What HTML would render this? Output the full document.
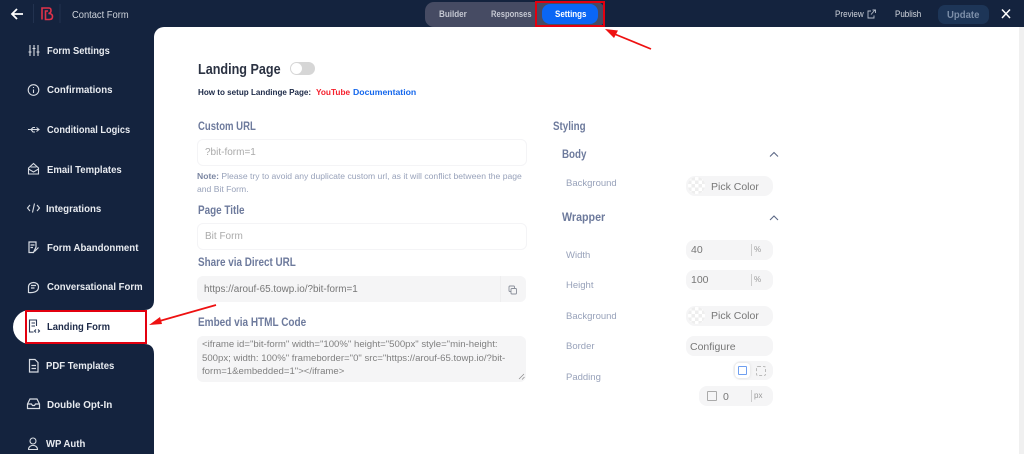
<!DOCTYPE html>
<html><head><meta charset="utf-8"><style>
html,body{margin:0;padding:0}
body{width:1024px;height:454px;overflow:hidden;position:relative;background:#14233e;font-family:"Liberation Sans",sans-serif}
.t{position:absolute;white-space:nowrap;line-height:1;transform-origin:0 0}
.side{color:#e8ebf0;font-size:10.5px;font-weight:bold}
.lab{color:#6d7a9c;font-size:11.5px;font-weight:bold}
.sub{color:#98a2ba;font-size:9.5px}
.box{position:absolute;box-sizing:border-box;border-radius:6px}
.in{border:1px solid #f4f4f6;background:#fff}
.gr{background:#f5f5f6}
.v{color:#777;font-size:10.5px}
.ck{background:repeating-conic-gradient(#eee 0 25%,#fff 0 50%) 0 0/7px 7px;border-radius:50%;position:absolute;width:17px;height:17px}
svg{position:absolute;left:0;top:0}
</style></head><body>
<div class="box" style="left:154px;top:27px;width:870px;height:427px;background:#fff;border-radius:10px 0 0 0"></div>
<div class="box" style="left:1019px;top:27px;width:5px;height:427px;background:#f0f0f0;border-radius:0"></div>
<div class="box" style="left:13px;top:310px;width:141px;height:34px;background:#fff;border-radius:17px 0 0 17px"></div>

<svg width="1024" height="454" fill="none">
<path d="M154 298V300Q154 310 144 310H154ZM154 354V344H144Q154 344 154 354Z" fill="#fff"/>
<path d="M12 14H23M17 9L12 14L17 19" stroke="#ffffff" stroke-width="1.800"/>
<path d="M33.500 4V23M60 4V23" stroke="#22324f"/>
<path d="M42 19.500V8H49Q51 8 51 10.500Q51 13 48.500 13.500Q52.500 13.500 52.500 16.500Q52.500 19.500 49.500 19.500H45.500V11H48" stroke="#e0324a" stroke-width="1.600"/>
<path d="M1002 9.500L1010 18M1010 9.500L1002 18" stroke="#fff" stroke-width="1.500"/>
<path d="M871 11H868V18H874V15.500M871 14.500L875 10M872.500 10H875.500V13" stroke="#b6bdca" stroke-width=".9"/>

<g stroke="#d8dce3" stroke-width="1.100">
<path d="M30 45V56M34 45V56M38 45V56M28.500 52H31.500M32.500 48.500H35.500M36.500 52H39.500"/>
<circle cx="33.500" cy="90" r="5.300"/><path d="M33.500 89.500V93M33.500 87V88"/>
<path d="M28 129.500H39M36.500 127.500L39 129.500L36.500 131.500M31 129.500L33 127.500H35M31 129.500L33 132H35"/>
<path d="M28.500 168L33.500 163.500L38.500 168V174H28.500ZM28.500 169L33.500 172L38.500 169M30.500 167H36.500"/>
<path d="M30 205L27.500 208L30 211M37 205L39.500 208L37 211M34.500 203.500L32.500 212.500"/>
<path d="M29 242H36V247L33.500 252.500H29ZM30.500 245H34.500M30.500 247.500H33M34.500 251.500L38.500 247.500" stroke-width="1.200"/>
<path d="M28.500 287C28.500 281 38.500 281 38.500 287C38.500 292 33 293 28.500 292.500ZM31 285.500H36M31 288H34.500" stroke-width="1.200"/>
<path d="M29.500 359.500H35L38 362.500V372H29.500ZM31.500 365.500H36M31.500 368.500H36" stroke-width="1.200"/>
<path d="M27.500 404L30 399H37L39.500 404V408.500H27.500ZM27.500 404H31.500L32.500 405.500H34.500L35.500 404H39.500" stroke-width="1.200"/>
<circle cx="33" cy="441" r="3"/><path d="M28.500 449.500C28.500 444 37.500 444 37.500 449.500Z"/>
</g>
<path d="M36.500 326V320H29.500V332H33.500M31.500 323H35M31.500 326H35M36 329.500L34.500 331L36 332.500M38 329.500L39.500 331L38 332.500" stroke="#2a3755" stroke-width="1.100"/>
<path d="M770 156.500L774 152.500L778 156.500M770 220L774 216L778 220" stroke="#5c6886" stroke-width="1.100"/>
</svg>

<!-- top bar -->
<span class="t" style="left:72px;top:10px;font-size:10.5px;color:#cfd4dc;transform:scaleX(.89)">Contact Form</span>
<div class="box" style="left:425px;top:2px;width:180px;height:25px;background:#464b63;border-radius:9px"></div>
<div class="box" style="left:542px;top:4px;width:56px;height:20px;background:#0a66f5;border-radius:8px"></div>
<span class="t" style="left:439px;top:10px;font-size:9.5px;font-weight:bold;color:#c5c8d2;transform:scaleX(.85)">Builder</span>
<span class="t" style="left:491px;top:10px;font-size:9.5px;font-weight:bold;color:#c5c8d2;transform:scaleX(.8)">Responses</span>
<span class="t" style="left:555px;top:10px;font-size:9.5px;font-weight:bold;color:#fff;transform:scaleX(.84)">Settings</span>
<span class="t" style="left:835px;top:10px;font-size:9.5px;color:#d0d4dc;transform:scaleX(.85)">Preview</span>
<span class="t" style="left:895px;top:10px;font-size:9.5px;color:#d8dbe2;transform:scaleX(.84)">Publish</span>
<div class="box" style="left:938px;top:5px;width:51px;height:19px;background:#1d3557;border-radius:7px"></div>
<span class="t" style="left:947px;top:10px;font-size:10.5px;font-weight:bold;color:#7c8ea8;transform:scaleX(.91)">Update</span>

<!-- side -->
<span class="t side" style="left:47px;top:46px;transform:scaleX(.89)">Form Settings</span>
<span class="t side" style="left:47px;top:85px;transform:scaleX(.92)">Confirmations</span>
<span class="t side" style="left:47px;top:125px;transform:scaleX(.88)">Conditional Logics</span>
<span class="t side" style="left:47px;top:165px;transform:scaleX(.91)">Email Templates</span>
<span class="t side" style="left:46px;top:204px;transform:scaleX(.92)">Integrations</span>
<span class="t side" style="left:47px;top:243px;transform:scaleX(.92)">Form Abandonment</span>
<span class="t side" style="left:47px;top:282px;transform:scaleX(.91)">Conversational Form</span>
<span class="t side" style="left:47px;top:322px;color:#1d2a48;transform:scaleX(.9)">Landing Form</span>
<span class="t side" style="left:46px;top:361px;transform:scaleX(.91)">PDF Templates</span>
<span class="t side" style="left:47px;top:400px;transform:scaleX(.94)">Double Opt-In</span>
<span class="t side" style="left:46px;top:439px;transform:scaleX(.91)">WP Auth</span>

<!-- heading -->
<span class="t" style="left:198px;top:62px;font-size:15px;color:#2b3242;font-weight:bold;transform:scaleX(.84)">Landing Page</span>
<div class="box" style="left:290px;top:62px;width:25px;height:13px;background:#d6d6d6;border-radius:7px"></div>
<div class="box" style="left:291px;top:63px;width:11px;height:11px;background:#fff;border-radius:50%"></div>
<span class="t" style="left:198px;top:88px;font-size:8.7px;font-weight:bold;color:#1d2a48;transform:scaleX(.93)">How to setup Landinge Page:</span>
<span class="t" style="left:316px;top:88px;font-size:8.7px;font-weight:bold;color:#f5202c;transform:scaleX(.95)">YouTube</span>
<span class="t" style="left:353px;top:88px;font-size:8.7px;font-weight:bold;color:#1467ec">Documentation</span>

<!-- left column -->
<span class="t lab" style="left:198px;top:122px;transform:scaleX(.83)">Custom URL</span>
<div class="box in" style="left:197px;top:139px;width:330px;height:27px"></div>
<span class="t" style="left:205px;top:148px;font-size:10px;color:#aaa">?bit-form=1</span>
<span class="t sub" style="left:197px;top:172px;font-size:8.6px"><b style="color:#7b86a2">Note:</b> Please try to avoid any duplicate custom url, as it will conflict between the page</span>
<span class="t sub" style="left:197px;top:185px;font-size:8.6px">and Bit Form.</span>
<span class="t lab" style="left:198px;top:206px;transform:scaleX(.86)">Page Title</span>
<div class="box in" style="left:197px;top:223px;width:330px;height:27px"></div>
<span class="t" style="left:205px;top:232px;font-size:10px;color:#aaa">Bit Form</span>
<span class="t lab" style="left:198px;top:258px;transform:scaleX(.86)">Share via Direct URL</span>
<div class="box gr" style="left:197px;top:276px;width:329px;height:26px"></div>
<div class="box" style="left:500px;top:276px;width:1px;height:26px;background:#eeeeef;border-radius:0"></div>
<span class="t" style="left:204px;top:285px;font-size:10px;color:#777;transform:scaleX(.99)">https://arouf-65.towp.io/?bit-form=1</span>
<span class="t lab" style="left:198px;top:318px;transform:scaleX(.87)">Embed via HTML Code</span>
<div class="box gr" style="left:197px;top:336px;width:329px;height:46px"></div>
<span class="t" style="left:202px;top:340px;font-size:9.6px;color:#808080">&lt;iframe id="bit-form" width="100%" height="500px" style="min-height:</span>
<span class="t" style="left:202px;top:354px;font-size:9.6px;color:#808080">500px; width: 100%" frameborder="0" src="https://arouf-65.towp.io/?bit-</span>
<span class="t" style="left:202px;top:367px;font-size:9.6px;color:#808080">form=1&amp;embedded=1"&gt;&lt;/iframe&gt;</span>

<!-- right column -->
<span class="t lab" style="left:553px;top:122px;transform:scaleX(.85)">Styling</span>
<span class="t lab" style="left:562px;top:150px;transform:scaleX(.85)">Body</span>
<span class="t sub" style="left:566px;top:179px">Background</span>
<div class="box gr" style="left:686px;top:176px;width:87px;height:20px;border-radius:9px"></div>
<div class="ck" style="left:688px;top:177px"></div>
<span class="t v" style="left:711px;top:182px">Pick Color</span>
<span class="t lab" style="left:562px;top:213px;transform:scaleX(.93)">Wrapper</span>
<span class="t sub" style="left:566px;top:251px">Width</span>
<div class="box gr" style="left:686px;top:240px;width:87px;height:20px;border-radius:8px"></div>
<span class="t v" style="left:691px;top:245px">40</span>
<div class="box" style="left:751px;top:244px;width:1px;height:12px;background:#ccc;border-radius:0"></div>
<span class="t" style="left:754px;top:246px;font-size:8px;color:#999">%</span>
<span class="t sub" style="left:566px;top:281px">Height</span>
<div class="box gr" style="left:686px;top:270px;width:87px;height:20px;border-radius:8px"></div>
<span class="t v" style="left:691px;top:275px">100</span>
<div class="box" style="left:751px;top:274px;width:1px;height:12px;background:#ccc;border-radius:0"></div>
<span class="t" style="left:754px;top:276px;font-size:8px;color:#999">%</span>
<span class="t sub" style="left:566px;top:312px">Background</span>
<div class="box gr" style="left:686px;top:306px;width:87px;height:20px;border-radius:9px"></div>
<div class="ck" style="left:688px;top:307px"></div>
<span class="t v" style="left:711px;top:311px">Pick Color</span>
<span class="t sub" style="left:566px;top:342px">Border</span>
<div class="box gr" style="left:686px;top:336px;width:87px;height:20px;border-radius:8px"></div>
<span class="t v" style="left:690px;top:342px">Configure</span>
<span class="t sub" style="left:566px;top:373px">Padding</span>
<div class="box gr" style="left:733px;top:361px;width:40px;height:19px;border-radius:8px"></div>
<div class="box" style="left:735px;top:363px;width:15px;height:15px;background:#fff;border-radius:4px;box-shadow:0 0 3px #ddd"></div>
<div class="box" style="left:738px;top:366px;width:9px;height:9px;border:1px solid #6f9ff0;border-radius:1px"></div>
<div class="box" style="left:756px;top:366px;width:10px;height:10px;border:1px dashed #bbb;border-radius:2px"></div>
<div class="box gr" style="left:699px;top:386px;width:74px;height:20px;border-radius:8px"></div>
<div class="box" style="left:707px;top:391px;width:10px;height:10px;border:1px solid #aaa;border-radius:1px"></div>
<span class="t v" style="left:723px;top:392px">0</span>
<div class="box" style="left:751px;top:390px;width:1px;height:12px;background:#ccc;border-radius:0"></div>
<span class="t" style="left:754px;top:392px;font-size:8px;color:#999">px</span>

<!-- annotations -->
<div class="box" style="left:535px;top:1px;width:70px;height:26px;border:2px solid #e3000f;border-radius:0"></div>
<div class="box" style="left:25px;top:310px;width:122px;height:34px;border:2px solid #e3000f;border-radius:0"></div>
<svg width="1024" height="454" fill="none">
<rect x="509" y="286" width="5.5" height="5.5" rx="1" stroke="#8a8f9a" stroke-width=".9"/>
<rect x="511" y="288.500" width="5.5" height="5.5" rx="1" stroke="#8a8f9a" stroke-width=".9" fill="#f5f5f6"/>
<path d="M519 379L524 374M522 379.500L524.500 377" stroke="#888" stroke-width=".7"/>
<path d="M651 49L612 33" stroke="#ee1111" stroke-width="1.700"/>
<path d="M605 29L618 30.500L614 38Z" fill="#ee1111"/>
<path d="M216 305L156 322" stroke="#ee1111" stroke-width="1.700"/>
<path d="M149 325L160 317L162 324Z" fill="#ee1111"/>
</svg>
</body></html>
